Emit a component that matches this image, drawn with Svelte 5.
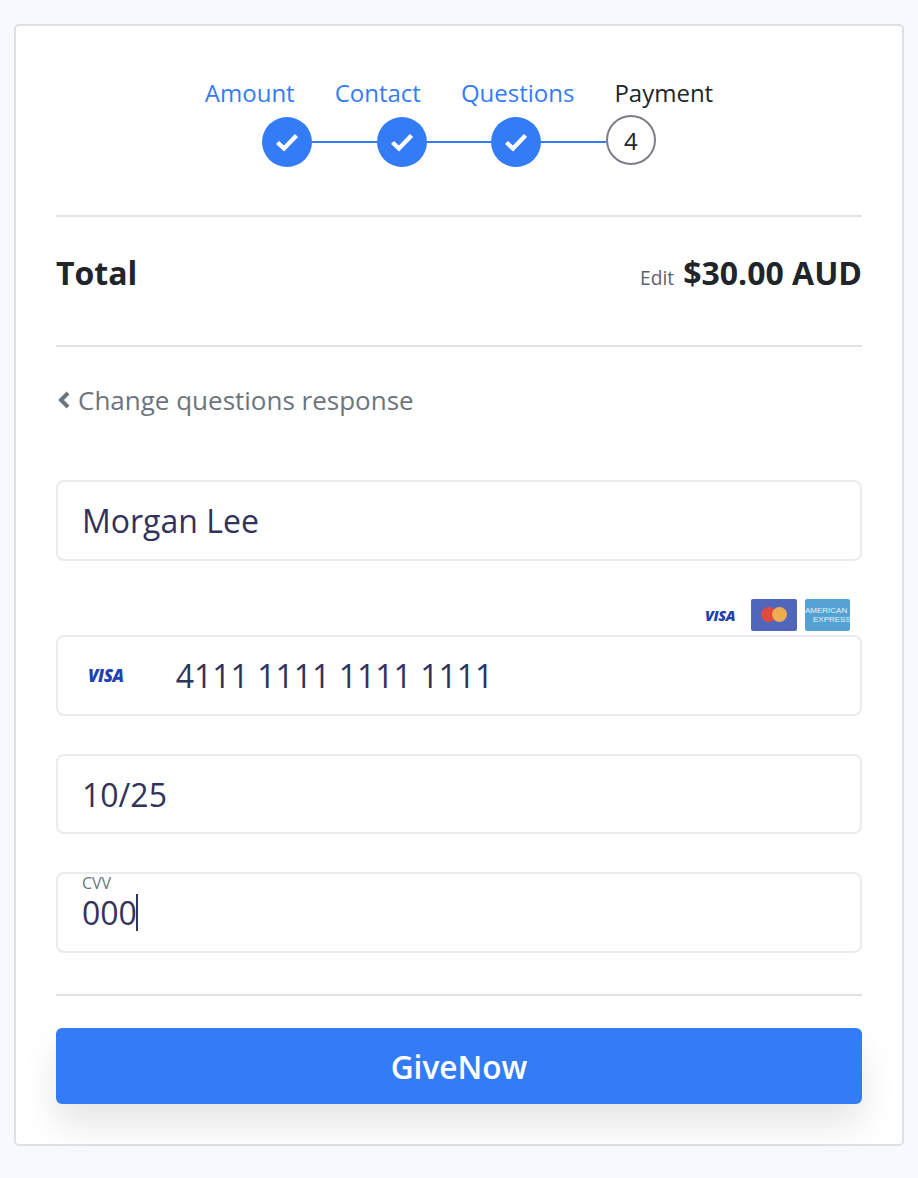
<script>
    const labels = [
        { text: 'Amount', done: true },
        { text: 'Contact', done: true },
        { text: 'Questions', done: true },
        { text: 'Payment', done: false }
    ];
</script>

<div class="page">
    <div class="card">
        <!-- stepper -->
        <div class="step-labels">
            {#each labels as label}
                <span class="step-label" class:done={label.done}>{label.text}</span>
            {/each}
        </div>
        <div class="step-track">
            {#each [1, 2, 3] as n}
                <span class="dot">
                    <svg width="24" height="20" viewBox="0 0 24 20">
                        <path d="M2.5 10.5 L9 16.5 L21.5 3.5" fill="none" stroke="#fff" stroke-width="4.4" />
                    </svg>
                </span>
                <span class="line"></span>
            {/each}
            <span class="dot current">4</span>
        </div>

        <div class="total">
            <span class="total-title">Total</span>
            <span class="total-right"><span class="edit">Edit</span><b>$30.00 AUD</b></span>
        </div>

        <div class="back">
            <svg width="14" height="20" viewBox="0 0 14 20">
                <path d="M11 3 L4 10 L11 17" fill="none" stroke="#6c757d" stroke-width="4" />
            </svg>
            <span>Change questions response</span>
        </div>

        <div class="field name">Morgan Lee</div>

        <div class="brands">
            <span class="visa small">VISA</span>
            <span class="brand mc">
                <i class="red"></i>
                <i class="orange"></i>
            </span>
            <span class="brand amex"><span>AMERICAN</span><span class="second">EXPRESS</span></span>
        </div>

        <div class="field number">
            <span class="visa">VISA</span>
            <span>4111 1111 1111 1111</span>
        </div>

        <div class="field expiry">10/25</div>

        <div class="field cvv">
            <span class="cvv-label">CVV</span>
            <span class="cvv-value">000<span class="caret"></span></span>
        </div>

        <div class="submit-wrap">
            <button class="submit">GiveNow</button>
        </div>
    </div>
</div>

<style>
    :global(body) {
        margin: 0;
        background: #f8f9fe;
    }

    .page {
        box-sizing: border-box;
        height: 1178px;
        padding: 24px 14px 0;
        font-family: "Open Sans", sans-serif;
        color: #212529;
    }

    .card {
        box-sizing: border-box;
        height: 1122px;
        padding: 0 40px;
        background: #fff;
        border: 2px solid #e0e0e0;
        border-radius: 5px;
    }

    .step-labels {
        display: flex;
        justify-content: center;
        gap: 40px;
        padding-top: 49px;
    }

    .step-label {
        font-size: 24px;
        line-height: 36px;
    }

    .step-label.done {
        color: #347cf6;
    }

    .step-track {
        display: flex;
        justify-content: center;
        align-items: center;
        height: 50px;
        margin-top: 6px;
        padding-bottom: 48px;
        border-bottom: 2px solid #e3e3e3;
    }

    .dot {
        box-sizing: border-box;
        display: flex;
        align-items: center;
        justify-content: center;
        flex: none;
        width: 50px;
        height: 50px;
        border-radius: 50%;
        background: #347cf6;
    }

    .dot.current {
        margin-bottom: 4px;
        background: #fff;
        border: 2px solid #7b7f85;
        font-size: 24px;
    }

    .line {
        flex: none;
        width: 64.67px;
        height: 2px;
        background: #347cf6;
    }

    .total {
        display: flex;
        justify-content: space-between;
        align-items: center;
        box-sizing: border-box;
        height: 130px;
        padding-bottom: 17px;
        border-bottom: 2px solid #e3e3e3;
    }

    .total-title {
        font-size: 32px;
        font-weight: 700;
    }

    .total-right {
        display: flex;
        align-items: baseline;
        gap: 9px;
    }

    .total-right b {
        font-size: 32px;
        font-weight: 700;
    }

    .edit {
        font-size: 19.2px;
        color: #5f6368;
    }

    .back {
        display: flex;
        align-items: center;
        gap: 7px;
        height: 40px;
        margin-top: 33px;
        margin-bottom: 60px;
        padding-left: 1px;
        font-size: 26px;
        color: #6c757d;
    }

    .field {
        box-sizing: border-box;
        display: flex;
        align-items: center;
        height: 81px;
        padding: 0 24px;
        border: 2px solid #e9ecef;
        border-radius: 8px;
        font-size: 32px;
        color: #32325d;
    }

    .brands {
        display: flex;
        justify-content: flex-end;
        align-items: center;
        gap: 8px;
        height: 32px;
        margin: 38px 12px 4px 0;
    }

    .visa {
        font-family: "Open Sans", sans-serif;
        font-style: italic;
        font-weight: 800;
        font-size: 17px;
        letter-spacing: -0.4px;
        color: #2440b0;
    }

    .visa.small {
        margin-right: 8px;
        font-size: 14.4px;
    }

    .brand {
        box-sizing: border-box;
        position: relative;
        display: block;
        width: 46px;
        height: 32px;
        border-radius: 2px;
    }

    .mc {
        background: #4f66bb;
    }

    .mc i {
        position: absolute;
        top: 8px;
        width: 15px;
        height: 15px;
        border-radius: 50%;
    }

    .red {
        left: 10px;
        background: #e04a3f;
    }

    .orange {
        left: 21px;
        background: #f4b04b;
        opacity: 0.95;
    }

    .amex {
        display: flex;
        flex-direction: column;
        justify-content: center;
        width: 45px;
        background: #55a2d2;
        color: #e8f3fa;
        font-family: "Liberation Sans", sans-serif;
        font-size: 8px;
        line-height: 9px;
        white-space: nowrap;
        text-align: left;
    }

    .second {
        margin-left: 8px;
    }

    .number {
        gap: 52px;
        padding-left: 30px;
    }

    .expiry {
        height: 80px;
        margin-top: 38px;
    }

    .cvv {
        position: relative;
        margin-top: 38px;
    }

    .cvv-label {
        position: absolute;
        left: 24px;
        top: 2px;
        font-size: 16px;
        line-height: 14px;
        color: #6c757d;
    }

    .cvv-value {
        display: flex;
        align-items: center;
        line-height: 37px;
    }

    .caret {
        width: 2px;
        height: 37px;
        margin-left: -1px;
        background: #32325d;
    }

    .submit-wrap {
        margin-top: 41px;
        padding-top: 32px;
        border-top: 2px solid #e3e3e3;
    }

    .submit {
        display: block;
        width: 100%;
        height: 76px;
        padding: 0;
        border: none;
        border-radius: 6px;
        background: #347cf6;
        color: #fff;
        font-family: "Open Sans", sans-serif;
        font-size: 31.6px;
        font-weight: 550;
        box-shadow: 0 20px 35px rgba(0, 0, 0, 0.1);
    }
</style>
